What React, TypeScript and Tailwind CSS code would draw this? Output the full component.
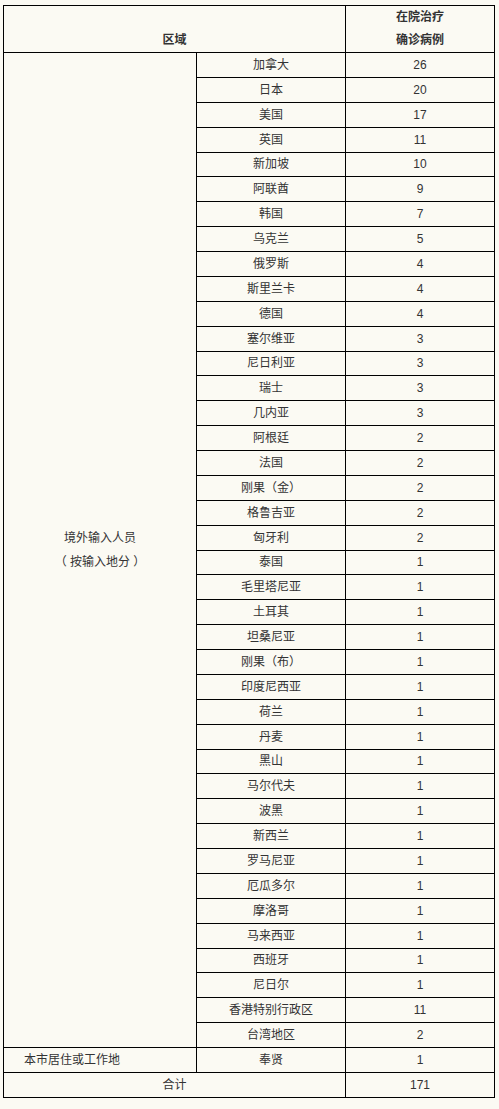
import React from 'react';

const rows: [string, string][] = [
  ['加拿大', '26'],
  ['日本', '20'],
  ['美国', '17'],
  ['英国', '11'],
  ['新加坡', '10'],
  ['阿联酋', '9'],
  ['韩国', '7'],
  ['乌克兰', '5'],
  ['俄罗斯', '4'],
  ['斯里兰卡', '4'],
  ['德国', '4'],
  ['塞尔维亚', '3'],
  ['尼日利亚', '3'],
  ['瑞士', '3'],
  ['几内亚', '3'],
  ['阿根廷', '2'],
  ['法国', '2'],
  ['刚果（金）', '2'],
  ['格鲁吉亚', '2'],
  ['匈牙利', '2'],
  ['泰国', '1'],
  ['毛里塔尼亚', '1'],
  ['土耳其', '1'],
  ['坦桑尼亚', '1'],
  ['刚果（布）', '1'],
  ['印度尼西亚', '1'],
  ['荷兰', '1'],
  ['丹麦', '1'],
  ['黑山', '1'],
  ['马尔代夫', '1'],
  ['波黑', '1'],
  ['新西兰', '1'],
  ['罗马尼亚', '1'],
  ['厄瓜多尔', '1'],
  ['摩洛哥', '1'],
  ['马来西亚', '1'],
  ['西班牙', '1'],
  ['尼日尔', '1'],
  ['香港特别行政区', '11'],
  ['台湾地区', '2'],
];

const cell = 'border border-black h-[24.88px] p-0 text-center align-middle leading-[20px]';

export default function App() {
  return (
    <div
      className="min-h-[1109px] w-[499px] bg-[#fbfaf3] pl-[3px] pt-[5px] text-[12px] leading-[24px] text-[#333]"
      style={{ fontFamily: '"Liberation Sans", "Noto Sans CJK SC", sans-serif' }}
    >
      <table className="w-[491px] table-fixed border-collapse">
        <colgroup>
          <col className="w-[193px]" />
          <col className="w-[149px]" />
          <col className="w-[149px]" />
        </colgroup>
        <tbody>
          <tr>
            <td colSpan={2} className="h-[47px] border border-black p-0 text-center align-bottom font-bold">
              区域
            </td>
            <td className="h-[47px] border border-black p-0 text-center align-middle font-bold">
              <div className="leading-[23px]">在院治疗</div>
              <div className="leading-[23px]">确诊病例</div>
            </td>
          </tr>
          {rows.map(([name, n], i) => (
            <tr key={name}>
              {i === 0 && (
                <td rowSpan={rows.length} className="border border-black p-0 text-center align-middle">
                  <div>境外输入人员</div>
                  <div>（ 按输入地分 ）</div>
                </td>
              )}
              <td className={cell}>{name}</td>
              <td className={cell}>{n}</td>
            </tr>
          ))}
          <tr>
            <td className="h-[24.88px] border border-black p-0 pl-[20px] text-left align-middle leading-[20px]">本市居住或工作地</td>
            <td className={cell}>奉贤</td>
            <td className={cell}>1</td>
          </tr>
          <tr>
            <td colSpan={2} className={cell}>
              合计
            </td>
            <td className={cell}>171</td>
          </tr>
        </tbody>
      </table>
    </div>
  );
}
